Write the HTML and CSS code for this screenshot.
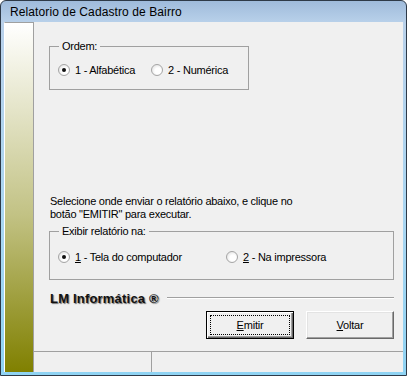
FILE: index.html
```html
<!DOCTYPE html>
<html lang="pt-BR">
<head>
    <meta charset="UTF-8">
    <title>Relatorio de Cadastro de Bairro</title>
    <link rel="stylesheet" href="styles.css">
</head>
<body>
    <div class="window">
        <div class="titlebar">Relatorio de Cadastro de Bairro</div>
        <div class="client">
            <div class="side"></div>
            <div class="main">
                <div class="content">
                    <fieldset class="group group-ordem">
                        <legend>Ordem:</legend>
                        <div class="options">
                            <label class="option"><span class="radio on"></span><span>1 - Alfabética</span></label>
                            <label class="option"><span class="radio"></span><span>2 - Numérica</span></label>
                        </div>
                    </fieldset>

                    <p class="info">Selecione onde enviar o relatório abaixo, e clique no<br>botão "EMITIR" para executar.</p>

                    <fieldset class="group group-saida">
                        <legend>Exibir relatório na:</legend>
                        <div class="options">
                            <label class="option wide"><span class="radio on"></span><span><u>1</u> - Tela do computador</span></label>
                            <label class="option"><span class="radio"></span><span><u>2</u> - Na impressora</span></label>
                        </div>
                    </fieldset>

                    <div class="brand">
                        <span class="brand-name">LM Informática ®</span>
                        <span class="brand-line"></span>
                    </div>

                    <div class="actions">
                        <button class="btn default"><u>E</u>mitir</button>
                        <button class="btn"><u>V</u>oltar</button>
                    </div>
                </div>
                <div class="statusbar">
                    <div class="panel first"></div>
                    <div class="panel"></div>
                </div>
            </div>
        </div>
    </div>
</body>
</html>
```

FILE: styles.css
```css
* {
    margin: 0;
    padding: 0;
    box-sizing: border-box;
}

body {
    font-family: "Liberation Sans", Arial, sans-serif;
    font-size: 11px;
    letter-spacing: -0.25px;
    color: #000;
    background: #fff;
}

.window {
    width: 407px;
    height: 376px;
    border: 1px solid #2e3a48;
    border-radius: 6px 6px 0 0;
    padding: 0 3px 3px 3px;
    background: linear-gradient(#9fbbdb, #b9d1ea 22px, #a9d6f2 60%, #8fd3f3);
    display: flex;
    flex-direction: column;
}

.titlebar {
    height: 21px;
    line-height: 23px;
    padding-left: 6px;
    font-size: 12px;
    letter-spacing: 0.1px;
    color: #000;
}

.client {
    flex: 1;
    display: flex;
    background-color: #f0f0f0;
}

.side {
    width: 30px;
    border-top: 1px solid #a0a0a0;
    border-right: 1px solid #a0a0a0;
    border-left: 1px solid #fff;
    background: linear-gradient(#ffffff, #e4e4c8 25%, #c2c284 55%, #808000);
}

.main {
    flex: 1;
    display: flex;
    flex-direction: column;
}

.content {
    flex: 1;
    padding: 17px 9px 0 15px;
}

.group {
    border: 1px solid #a0a0a0;
    padding: 10px 0 12px 8px;
}

.group legend {
    margin-left: 1px;
    padding: 0 3px;
    line-height: 14px;
}

.group-ordem {
    width: 200px;
}

.group-saida {
    width: 345px;
    margin-top: 3px;
    padding-top: 12px;
    padding-bottom: 15px;
}

.options {
    display: flex;
    gap: 16px;
    line-height: 14px;
}

.option {
    display: flex;
    align-items: center;
    gap: 5px;
}

.option.wide {
    width: 152px;
}

.radio {
    width: 12px;
    height: 12px;
    border-radius: 50%;
    border: 1px solid #a5a5a5;
    background: radial-gradient(circle at 60% 60%, #ffffff 35%, #d8d8d8 100%);
    display: inline-flex;
    align-items: center;
    justify-content: center;
}

.radio.on::after {
    content: "";
    width: 4px;
    height: 4px;
    border-radius: 50%;
    background-color: #111;
}

.info {
    margin-top: 105px;
    line-height: 13px;
    padding-left: 1px;
}

.brand {
    margin-top: 11px;
    display: flex;
    align-items: center;
    height: 14px;
    padding-left: 1px;
}

.brand-name {
    font-size: 13px;
    font-weight: bold;
    letter-spacing: 0.2px;
    color: #111;
    text-shadow: 1px 1px 1px #6c6c6c;
}

.brand-line {
    flex: 1;
    height: 2px;
    margin-left: 8px;
    border-top: 1px solid #a0a0a0;
    border-bottom: 1px solid #fff;
}

.actions {
    margin-top: 6px;
    display: flex;
    justify-content: flex-end;
    gap: 12px;
}

.btn {
    width: 88px;
    height: 28px;
    font-family: "Liberation Sans", Arial, sans-serif;
    font-size: 11px;
    letter-spacing: -0.2px;
    background-color: #f0f0f0;
    border: 1px solid;
    border-color: #fff #696969 #696969 #fff;
    box-shadow: inset -1px -1px #a0a0a0, inset 1px 1px #e3e3e3;
    color: #000;
}

.btn.default {
    border: 1px solid #000;
    box-shadow: inset 1px 1px #fff, inset -1px -1px #696969, inset -2px -2px #a0a0a0;
    outline: 1px dotted #000;
    outline-offset: -5px;
}

.statusbar {
    height: 21px;
    border-top: 1px solid #a0a0a0;
    display: flex;
}

.panel {
    flex: 1;
}

.panel.first {
    flex: 0 0 118px;
    border-right: 1px solid #a0a0a0;
}
```
